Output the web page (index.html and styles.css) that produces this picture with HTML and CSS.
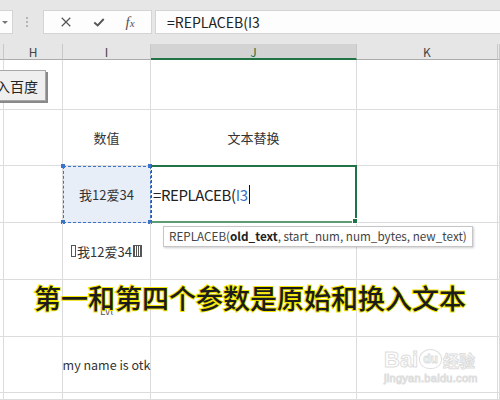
FILE: index.html
```html
<!DOCTYPE html>
<html lang="zh-CN">
<head>
    <meta charset="UTF-8">
    <title>REPLACEB</title>
    <link rel="stylesheet" href="styles.css">
</head>
<body>
    <div class="app">
        <div class="formula-bar">
            <div class="name-box"><span class="caret"></span></div>
            <div class="grip"><i></i><i></i><i></i></div>
            <div class="fx-tools">
                <svg class="tool-icon" viewBox="0 0 14 14"><path d="M2 2 L12 12 M12 2 L2 12" stroke="#555" stroke-width="1.4" fill="none"/></svg>
                <svg class="tool-icon" viewBox="0 0 14 14"><path d="M1.5 7.5 L5.5 11 L12.5 3.5" stroke="#555" stroke-width="2.2" fill="none"/></svg>
                <span class="fx">f<sub>x</sub></span>
            </div>
            <div class="formula-input">=REPLACEB(I3</div>
        </div>

        <div class="sheet">
            <div class="col-head"></div>
            <div class="col-head">H</div>
            <div class="col-head">I</div>
            <div class="col-head active">J</div>
            <div class="col-head">K</div>
            <div class="col-head"></div>

            <div class="cell"></div><div class="cell"></div><div class="cell"></div><div class="cell"></div><div class="cell"></div><div class="cell"></div>

            <div class="cell"></div><div class="cell"></div>
            <div class="cell center">数值</div>
            <div class="cell center">文本替换</div>
            <div class="cell"></div><div class="cell"></div>

            <div class="cell"></div><div class="cell"></div>
            <div class="cell center copied">我12爱34<span class="handle tl"></span><span class="handle tr"></span><span class="handle bl"></span><span class="handle br"></span></div>
            <div class="cell editing">=REPLACEB(<span class="ref">I3</span><span class="cursor"></span><span class="fill-handle"></span></div>
            <div class="cell"></div><div class="cell"></div>

            <div class="cell"></div><div class="cell"></div>
            <div class="cell center"><span class="box thin"></span>我12爱34<span class="box"></span></div>
            <div class="cell"></div><div class="cell"></div><div class="cell"></div>

            <div class="cell"></div><div class="cell"></div>
            <div class="cell center small">Lvl</div>
            <div class="cell"></div><div class="cell"></div><div class="cell"></div>

            <div class="cell"></div><div class="cell"></div>
            <div class="cell center latin">my name is otk</div>
            <div class="cell"></div><div class="cell"></div><div class="cell"></div>

            <div class="cell"></div><div class="cell"></div><div class="cell"></div><div class="cell"></div><div class="cell"></div><div class="cell"></div>

            <button class="sheet-button">入百度</button>
            <div class="tooltip">REPLACEB(<b>old_text</b>, start_num, num_bytes, new_text)</div>
        </div>

        <div class="caption">第一和第四个参数是原始和换入文本</div>

        <div class="watermark">
            <div class="wm-logo"><span>Bai</span><span class="paw">du</span><span class="wm-cn">经验</span></div>
            <div class="wm-url">jingyan.baidu.com</div>
        </div>
    </div>
</body>
</html>
```

FILE: styles.css
```css
:root {
    --grid: #dcdcdc;
    --head: #e6e6e6;
    --green: #217346;
    --blue: #3a73c9;
}

body {
    margin: 0;
    font-family: "Noto Sans CJK SC", "Noto Sans", sans-serif;
    color: #333;
    background: #fff;
}

.app {
    position: relative;
    width: 500px;
    height: 400px;
    overflow: hidden;
    background: #fff;
}

/* formula bar */
.formula-bar {
    display: flex;
    align-items: flex-start;
    height: 44px;
    padding-top: 10px;
    box-sizing: border-box;
    background: var(--head);
}

.name-box {
    width: 13px;
    height: 24px;
    background: #fdfdfd;
    border: 1px solid #d4d4d4;
    border-left: none;
    box-sizing: border-box;
    position: relative;
}

.caret {
    position: absolute;
    left: 2px;
    top: 10px;
    border-left: 3px solid transparent;
    border-right: 3px solid transparent;
    border-top: 3px solid #777;
}

.grip {
    display: flex;
    flex-direction: column;
    gap: 2px;
    margin: 7px 0 0 13px;
    width: 2px;
}

.grip i {
    width: 2px;
    height: 2px;
    background: #b5b5b5;
}

.fx-tools {
    display: flex;
    align-items: center;
    justify-content: space-around;
    margin-left: 15px;
    width: 109px;
    height: 24px;
    padding: 0 6px;
    background: #fdfdfd;
    border: 1px solid #d4d4d4;
    box-sizing: border-box;
}

.tool-icon {
    width: 12px;
    height: 12px;
}

.fx {
    font-family: "Liberation Serif", serif;
    font-style: italic;
    font-size: 15px;
    color: #555;
    line-height: 1;
}

.fx sub {
    font-size: 11px;
    vertical-align: 0;
}

.formula-input {
    flex: 1;
    margin-left: 3px;
    height: 24px;
    padding-left: 11px;
    background: #fdfdfd;
    border: 1px solid #d4d4d4;
    border-right: none;
    box-sizing: border-box;
    font-size: 14px;
    line-height: 22px;
    color: #222;
}

/* sheet grid */
.sheet {
    position: relative;
    display: grid;
    grid-template-columns: 4px 59px 88px 206px 141px 1fr;
    grid-template-rows: 16px 50px 56px 57px 57px 57px 56px 1fr;
    height: 356px;
}

.col-head {
    background: var(--head);
    border-right: 1px solid #c8c8c8;
    border-bottom: 1px solid #ababab;
    font-size: 12px;
    line-height: 15px;
    text-align: center;
    color: #444;
}

.col-head.active {
    background: #d3d3d3;
    border-bottom: 2px solid var(--green);
    color: var(--green);
}

.cell {
    position: relative;
    border-right: 1px solid var(--grid);
    border-bottom: 1px solid var(--grid);
    font-size: 13px;
    color: #333;
    white-space: nowrap;
}

.center {
    display: flex;
    align-items: center;
    justify-content: center;
}

.latin {
    font-size: 12.5px;
}

.small {
    font-size: 10px;
    color: #555;
    padding-top: 4px;
}

.copied {
    background: #e8eef8;
    outline: 1px dashed var(--blue);
    outline-offset: -1px;
}

.handle {
    position: absolute;
    width: 4px;
    height: 4px;
    background: var(--blue);
}

.handle.tl { left: -2px; top: -2px; }
.handle.tr { right: -2px; top: -2px; }
.handle.bl { left: -2px; bottom: -2px; }
.handle.br { right: -2px; bottom: -2px; }

.editing {
    display: flex;
    align-items: center;
    margin: -1px 0 0 0;
    padding-left: 1px;
    border: 2px solid var(--green);
    border-left: 1px dashed var(--green);
    border-bottom-color: #5e9c74;
    font-size: 15px;
    letter-spacing: -0.4px;
    color: #222;
    z-index: 1;
    background: #fff;
}

.ref {
    color: var(--blue);
}

.cursor {
    display: inline-block;
    width: 1px;
    height: 19px;
    margin-left: 1px;
    background: #111;
}

.fill-handle {
    position: absolute;
    right: -3px;
    bottom: -3px;
    width: 4px;
    height: 4px;
    background: var(--green);
    border: 1px solid #fff;
}

.box {
    display: inline-block;
    width: 7px;
    height: 10px;
    border: 1px solid #555;
    margin-left: 1px;
    background: repeating-linear-gradient(90deg, #555 0 1px, transparent 1px 2px);
}

.box.thin {
    width: 3px;
    background: none;
    margin: 0 1px 0 0;
}

/* overlay bits */
.sheet-button {
    position: absolute;
    left: -12px;
    top: 26px;
    width: 58px;
    height: 31px;
    padding: 0;
    background: #efefef;
    border: 1px solid #a8a8a8;
    box-shadow: 2px 2px 0 #8a8a8a;
    font-family: inherit;
    font-size: 14px;
    color: #222;
}

.tooltip {
    position: absolute;
    left: 163px;
    top: 182px;
    height: 19px;
    padding: 0 5px;
    background: #fff;
    border: 1px solid #c6c6c6;
    box-shadow: 1px 1px 2px rgba(0, 0, 0, 0.2);
    font-size: 11.7px;
    line-height: 18px;
    color: #444;
    white-space: nowrap;
    z-index: 2;
}

.tooltip b {
    color: #222;
}

.caption {
    position: absolute;
    left: 0;
    right: 0;
    top: 280px;
    text-align: center;
    font-size: 27px;
    font-weight: 500;
    line-height: 36px;
    color: #1c1c1c;
    -webkit-text-stroke: 2px #f2e600;
    paint-order: stroke fill;
    z-index: 3;
}

.watermark {
    position: absolute;
    left: 384px;
    top: 348px;
    color: #fff;
    -webkit-text-stroke: 1px #dedede;
    font-family: "Liberation Sans", sans-serif;
    text-align: center;
}

.wm-logo {
    display: flex;
    align-items: flex-end;
    gap: 1px;
    font-size: 22px;
    font-weight: bold;
    line-height: 24px;
}

.wm-logo .paw {
    font-size: 12px;
    line-height: 14px;
    border: 1px solid #dedede;
    border-radius: 50% 50% 45% 45%;
    padding: 2px 3px;
    margin-bottom: 3px;
}

.wm-cn {
    font-family: "Noto Sans CJK SC", sans-serif;
    font-size: 16px;
}

.wm-url {
    font-size: 11px;
    letter-spacing: 0.3px;
}
```
